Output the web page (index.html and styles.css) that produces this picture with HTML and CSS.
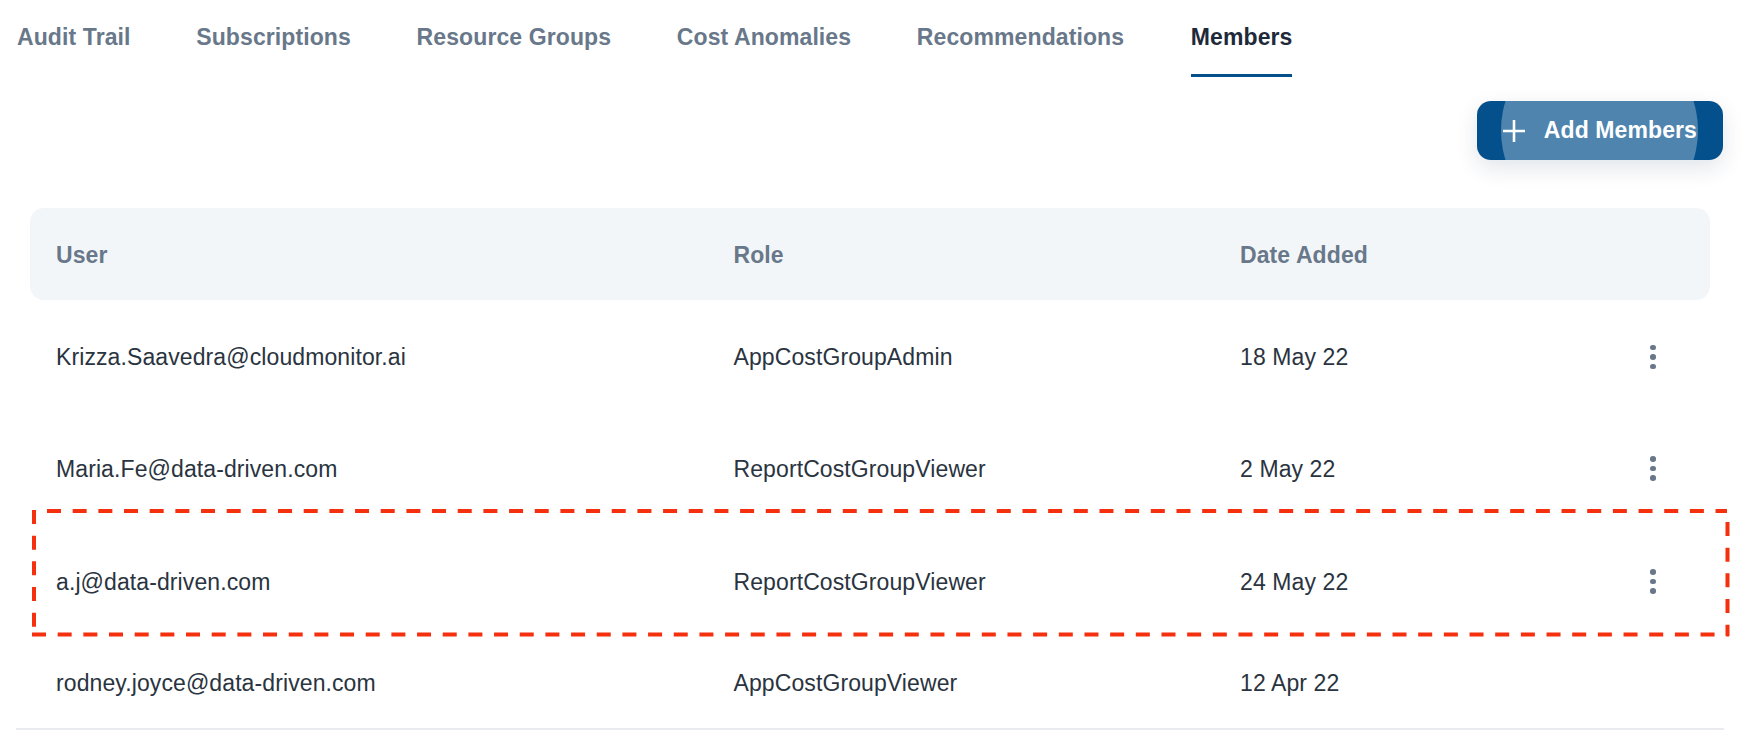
FILE: index.html
```html
<!DOCTYPE html>
<html lang="en">
<head>
  <meta charset="UTF-8" />
  <meta name="viewport" content="width=device-width, initial-scale=1.0" />
  <title>Members</title>
  <link rel="stylesheet" href="styles.css">
</head>
<body>
  <div class="page">
    <nav class="tabs">
      <a class="tab" href="#">Audit Trail</a>
      <a class="tab" href="#">Subscriptions</a>
      <a class="tab" href="#">Resource Groups</a>
      <a class="tab" href="#">Cost Anomalies</a>
      <a class="tab" href="#">Recommendations</a>
      <a class="tab active" href="#">Members</a>
    </nav>

    <div class="toolbar">
      <button class="add-btn">
        <span class="ripple"></span>
        <svg class="plus" width="22" height="22" viewBox="0 0 22 22">
          <path d="M11 0V22M0 11H22" stroke="#fff" stroke-width="2.6" fill="none" />
        </svg>
        <span class="add-label">Add Members</span>
      </button>
    </div>

    <div class="members">
      <div class="row head">
        <div>User</div>
        <div>Role</div>
        <div>Date Added</div>
      </div>

      <div class="row first">
        <div>Krizza.Saavedra@cloudmonitor.ai</div>
        <div>AppCostGroupAdmin</div>
        <div>18 May 22</div>
        <button class="more"><i></i><i></i><i></i></button>
      </div>
      <div class="row">
        <div>Maria.Fe@data-driven.com</div>
        <div>ReportCostGroupViewer</div>
        <div>2 May 22</div>
        <button class="more"><i></i><i></i><i></i></button>
      </div>
      <div class="row">
        <div>a.j@data-driven.com</div>
        <div>ReportCostGroupViewer</div>
        <div>24 May 22</div>
        <button class="more"><i></i><i></i><i></i></button>
      </div>
      <div class="row last">
        <div>rodney.joyce@data-driven.com</div>
        <div>AppCostGroupViewer</div>
        <div>12 Apr 22</div>
      </div>
    </div>
  </div>

  <!-- red dashed annotation drawn over the third row -->
  <svg class="callout" width="1756" height="736" viewBox="0 0 1756 736">
    <g stroke="#f4300f" stroke-width="4" stroke-dasharray="14 11.67" fill="none">
      <path d="M47 511H1727" />
      <path d="M34 510V632" />
      <path d="M32 634.5H1729" />
      <path d="M1727.5 522V636" />
    </g>
  </svg>
</body>
</html>
```

FILE: styles.css
```css
:root {
  --blue: #04508c;
  --gray: #68788a;
  --dark: #1e2a3a;
  --text: #2a3440;
}

body {
  margin: 0;
  background: #fff;
  color: var(--text);
  font-family: "Liberation Sans", Arial, sans-serif;
  font-size: 23px;
  line-height: 26px;
  letter-spacing: 0.1px;
  overflow: hidden;
}

.page {
  width: 1708px;
  padding: 0 32px 0 16px;
}

/* --- tabs --- */
.tabs {
  display: flex;
  gap: 65.7px;
}
.tab {
  padding: 24px 0;
  margin-left: 1px;
  margin-right: -1px;
  border-bottom: 3px solid transparent;
  color: var(--gray);
  font-weight: bold;
  text-decoration: none;
}
.tab.active {
  margin-left: 2px;
  color: var(--dark);
  border-bottom-color: var(--blue);
}

/* --- add button --- */
.toolbar {
  display: flex;
  justify-content: flex-end;
  margin: 24px 1px 48px 0;
}
.add-btn {
  position: relative;
  display: flex;
  align-items: center;
  gap: 19px;
  height: 59px;
  padding: 0 26px;
  overflow: hidden;
  border: none;
  border-radius: 14px;
  background: var(--blue);
  box-shadow: 0 8px 22px rgba(4, 40, 80, 0.12);
  color: #fff;
  font: bold 23px "Liberation Sans", Arial, sans-serif;
  letter-spacing: 0.1px;
}
.ripple {
  position: absolute;
  left: 24px;
  top: -69px;
  width: 197px;
  height: 197px;
  border-radius: 50%;
  background: rgba(255, 255, 255, 0.3);
}
.plus,
.add-label {
  position: relative;
}

/* --- table --- */
.members {
  border-bottom: 2px solid #e9ebee;
}
.row {
  display: grid;
  grid-template-columns: 677.5px 506.5px 1fr 24px;
  align-items: center;
  height: 113px;
  margin: 0 14px;
  padding: 0 45px 0 26px;
}
.row.head {
  box-sizing: border-box;
  height: 92px;
  padding-top: 2px;
  border-radius: 14px;
  background: #f3f6f9;
  color: var(--gray);
  font-weight: bold;
}
.row.first {
  height: 114px;
  margin-bottom: -2px;
}
.row.last {
  height: 90px;
}

.more {
  display: flex;
  flex-direction: column;
  align-items: center;
  gap: 4px;
  padding: 0;
  border: none;
  background: none;
}
.more i {
  width: 5.6px;
  height: 5.6px;
  border-radius: 50%;
  background: var(--gray);
}

.callout {
  position: absolute;
  left: 0;
  top: 0;
}
```
